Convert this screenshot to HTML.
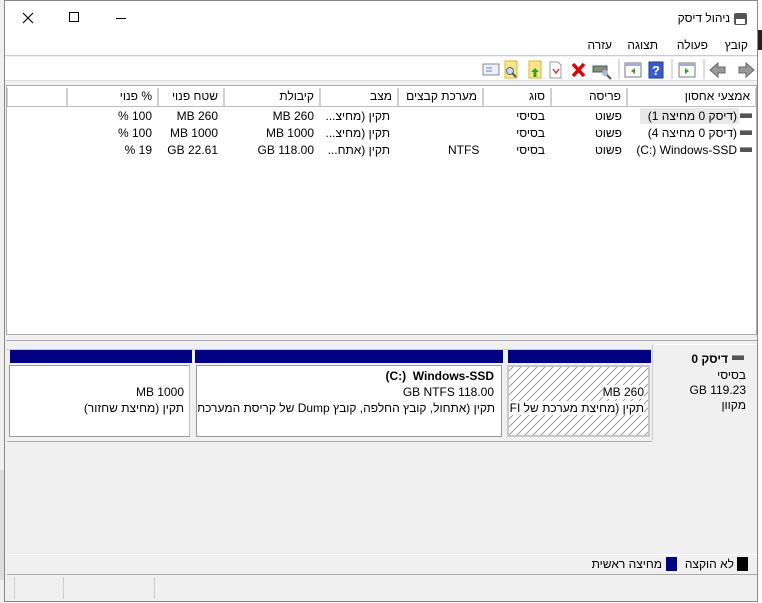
<!DOCTYPE html>
<html><head><meta charset="utf-8"><style>
*{margin:0;padding:0;box-sizing:border-box}
body{width:762px;height:603px;overflow:hidden;background:#fff;font-family:"Liberation Sans","Noto Sans CJK SC",sans-serif;font-size:12px;color:#000;position:relative}
.a{position:absolute}
.r{position:absolute;text-align:right;white-space:nowrap;direction:rtl}
.l{position:absolute;text-align:right;white-space:nowrap;direction:ltr}
.hd{position:absolute;top:88px;height:18px;border-right:1px solid #d0d0d0;border-left:1px solid #d0d0d0;background:#fff;text-align:right;padding-right:5px;line-height:17px;direction:rtl}
.dk{position:absolute;width:12px;height:5px;background:#555;border-top:1px solid #999}
</style></head><body>
<div class="a" style="left:0;top:0;width:5px;height:603px;background:#f0f0f0"></div>
<div class="a" style="left:0;top:470px;width:5px;height:110px;background:#ddd"></div>
<div class="a" style="left:757px;top:0;width:5px;height:603px;background:#fff"></div>
<div class="a" style="left:757px;top:30px;width:5px;height:20px;background:#222"></div>
<div class="a" style="left:4px;top:0;width:754px;height:602px;border:1px solid #888;background:#f0f0f0"></div>
<!-- title bar -->
<div class="a" style="left:5px;top:1px;width:752px;height:34px;background:#fff"></div>
<svg class="a" style="left:22px;top:12px" width="12" height="12"><path d="M1 1L11 11M11 1L1 11" stroke="#000" stroke-width="1.1"/></svg>
<div class="a" style="left:69px;top:12px;width:10px;height:10px;border:1px solid #000"></div>
<div class="a" style="left:116px;top:18px;width:10px;height:1px;background:#000"></div>
<div class="r" style="right:32px;top:11px;font-size:12px">ניהול דיסק</div>
<div class="a" style="left:734px;top:13px;width:13px;height:12px;background:#555;border-radius:2px"></div>
<div class="a" style="left:736px;top:19px;width:9px;height:5px;background:#fff"></div>
<!-- menu -->
<div class="a" style="left:5px;top:35px;width:752px;height:21px;background:#fff;border-bottom:1px solid #ccc"></div>
<div class="r" style="right:14px;top:38px">קובץ</div>
<div class="r" style="right:54px;top:38px">פעולה</div>
<div class="r" style="right:104px;top:38px">תצוגה</div>
<div class="r" style="right:150px;top:38px">עזרה</div>
<!-- toolbar -->
<div class="a" style="left:5px;top:57px;width:752px;height:24px;background:#fff;border-bottom:1px solid #ddd"></div>
<svg class="a" style="left:480px;top:59px" width="280" height="22">
<rect x="3" y="5" width="16" height="11" fill="#eef" stroke="#888"/><line x1="6" y1="9" x2="12" y2="9" stroke="#58c"/><line x1="6" y1="12" x2="12" y2="12" stroke="#58c"/>
<rect x="25" y="2" width="12" height="17" fill="#fde68a" stroke="#d8b43c"/><circle cx="30" cy="12" r="3.5" fill="#cde" stroke="#567"/><line x1="32" y1="14" x2="36" y2="18" stroke="#555" stroke-width="2"/>
<rect x="49" y="2" width="12" height="17" fill="#fde68a" stroke="#d8b43c"/><path d="M55 9l-4 4h2.5v5h3v-5h2.5z" fill="#2a2"/>
<path d="M70 3h8l3 3v13h-11z" fill="#fff" stroke="#999"/><path d="M73 10l3 4 3-4" stroke="#e33" fill="none" stroke-width="1.5"/>
<path d="M93 5l11 12M104 5l-11 12" stroke="#d00" stroke-width="3.5"/>
<rect x="113" y="7" width="14" height="6" fill="#888" stroke="#555"/><rect x="115" y="9" width="3" height="2" fill="#3c3"/><circle cx="125" cy="14" r="3" fill="#abc"/><line x1="127" y1="16" x2="131" y2="20" stroke="#555" stroke-width="2"/>
<line x1="139" y1="0" x2="139" y2="20" stroke="#bbb"/>
<rect x="145" y="4" width="16" height="14" fill="#fff" stroke="#777"/><rect x="145" y="4" width="16" height="3" fill="#aac"/><path d="M155 9l-4 3 4 3z" fill="#2a2"/>
<rect x="169" y="3" width="14" height="16" fill="#3a5cc8" stroke="#223a88"/><text x="172" y="16" fill="#fff" font-size="13" font-weight="bold" font-family="Liberation Sans">?</text>
<line x1="192" y1="0" x2="192" y2="20" stroke="#bbb"/>
<rect x="199" y="4" width="16" height="14" fill="#fff" stroke="#777"/><rect x="199" y="4" width="16" height="3" fill="#aac"/><path d="M205 9l4 3-4 3z" fill="#2a2"/>
<line x1="224" y1="0" x2="224" y2="20" stroke="#bbb"/>
<path d="M230 11l8-7v4h7v6h-7v4z" fill="#999" stroke="#666"/>
<path d="M274 11l-8-7v4h-7v6h7v4z" fill="#999" stroke="#666"/>
</svg>
<!-- list pane -->
<div class="a" style="left:6px;top:85px;width:751px;height:250px;background:#fff;border:1px solid #aaa"></div>
<div class="hd" style="left:7px;width:60px"></div>
<div class="hd" style="left:67px;width:91px">% פנוי</div>
<div class="hd" style="left:158px;width:66px">שטח פנוי</div>
<div class="hd" style="left:224px;width:96px">קיבולת</div>
<div class="hd" style="left:320px;width:78px">מצב</div>
<div class="hd" style="left:398px;width:85px">מערכת קבצים</div>
<div class="hd" style="left:483px;width:68px">סוג</div>
<div class="hd" style="left:551px;width:76px">פריסה</div>
<div class="hd" style="left:627px;width:129px">אמצעי אחסון</div>
<div class="a" style="left:7px;top:106px;width:749px;height:1px;background:#bbb"></div>
<div class="a" style="left:640px;top:108px;width:99px;height:16px;background:#e8e8e8"></div>
<!-- rows -->
<div class="dk" style="left:740px;top:113px"></div>
<div class="dk" style="left:740px;top:130px"></div>
<div class="dk" style="left:740px;top:147px"></div>
<div class="r" style="right:25px;top:109px">(דיסק 0 מחיצה 1)</div>
<div class="r" style="right:25px;top:126px">(דיסק 0 מחיצה 4)</div>
<div class="l" style="right:25px;top:143px">(C:) Windows-SSD</div>
<div class="r" style="right:140px;top:109px">פשוט</div><div class="r" style="right:140px;top:126px">פשוט</div><div class="r" style="right:140px;top:143px">פשוט</div>
<div class="r" style="right:217px;top:109px">בסיסי</div><div class="r" style="right:217px;top:126px">בסיסי</div><div class="r" style="right:217px;top:143px">בסיסי</div>
<div class="a" style="left:448px;top:143px">NTFS</div>
<div class="r" style="right:372px;top:109px">תקין (מחיצ...</div><div class="r" style="right:372px;top:126px">תקין (מחיצ...</div><div class="r" style="right:372px;top:143px">תקין (אתח...</div>
<div class="a" style="left:224px;width:90px;text-align:right;top:109px">MB 260</div><div class="a" style="left:224px;width:90px;text-align:right;top:126px">MB 1000</div><div class="a" style="left:224px;width:90px;text-align:right;top:143px">GB 118.00</div>
<div class="a" style="left:158px;width:60px;text-align:right;top:109px">MB 260</div><div class="a" style="left:158px;width:60px;text-align:right;top:126px">MB 1000</div><div class="a" style="left:158px;width:60px;text-align:right;top:143px">GB 22.61</div>
<div class="a" style="left:67px;width:85px;text-align:right;top:109px">% 100</div><div class="a" style="left:67px;width:85px;text-align:right;top:126px">% 100</div><div class="a" style="left:67px;width:85px;text-align:right;top:143px">% 19</div>
<!-- disk area -->
<div class="a" style="left:6px;top:340px;width:751px;height:1px;background:#aaa"></div>
<div class="a" style="left:7px;top:349px;width:645px;height:1px;background:#ccc"></div>
<div class="a" style="left:652px;top:344px;width:105px;height:96px;background:#f0f0f0;border-left:1px solid #ccc;border-top:1px solid #fff"></div>
<div class="a" style="left:7px;top:441px;width:645px;height:1px;background:#aaa"></div>
<div class="a" style="left:7px;top:350px;width:645px;height:91px;background:#f0f0f0"></div>
<div class="a" style="left:10px;top:350px;width:182px;height:13px;background:#000080"></div>
<div class="a" style="left:195px;top:350px;width:308px;height:13px;background:#000080"></div>
<div class="a" style="left:508px;top:350px;width:143px;height:13px;background:#000080"></div>
<div class="a" style="left:9px;top:365px;width:181px;height:72px;background:#fff;border:1px solid #999;border-right-color:#bbb"></div>
<div class="a" style="left:196px;top:365px;width:306px;height:72px;background:#fff;border:1px solid #999"></div>
<svg class="a" style="left:507px;top:365px" width="143" height="72"><defs><pattern id="h" width="8" height="8" patternUnits="userSpaceOnUse"><path d="M0 8L8 0" stroke="#888" stroke-width="0.8"/></pattern></defs><rect x="0" y="0" width="143" height="72" fill="#c8c8c8"/><rect x="2" y="2" width="139" height="68" fill="#fff"/><rect x="2" y="2" width="139" height="68" fill="url(#h)"/></svg>
<div class="r" style="right:578px;top:385px">MB 1000</div>
<div class="r" style="right:578px;top:401px">תקין (מחיצת שחזור)</div>
<div class="l" style="right:268px;top:369px;font-weight:bold">(C:)&nbsp; Windows-SSD</div>
<div class="r" style="right:268px;top:385px">GB NTFS 118.00</div>
<div class="a" style="left:198px;width:297px;top:401px;overflow:hidden;direction:rtl;white-space:nowrap;text-align:right">תקין (אתחול, קובץ החלפה, קובץ Dump של קריסת המערכת, מחיצה ראשית)</div>
<div class="a" style="left:509px;width:135px;top:385px;text-align:right"><span style="background:#fff">MB 260</span></div>
<div class="a" style="left:509px;width:135px;top:401px;overflow:hidden;direction:rtl;white-space:nowrap;text-align:right"><span style="background:#fff">תקין (מחיצת מערכת של EFI)</span></div>
<div class="dk" style="left:732px;top:355px"></div>
<div class="r" style="right:34px;top:352px;font-weight:bold">דיסק 0</div>
<div class="r" style="right:16px;top:368px">בסיסי</div>
<div class="r" style="right:16px;top:383px">GB 119.23</div>
<div class="r" style="right:16px;top:398px">מקוון</div>
<!-- legend -->
<div class="a" style="left:7px;top:554px;width:750px;height:1px;background:#fff"></div>
<div class="a" style="left:7px;top:574px;width:750px;height:1px;background:#aaa"></div>
<div class="a" style="left:737px;top:557px;width:11px;height:14px;background:#000"></div>
<div class="r" style="right:28px;top:557px">לא הוקצה</div>
<div class="a" style="left:666px;top:557px;width:11px;height:14px;background:#000080"></div>
<div class="r" style="right:100px;top:557px">מחיצה ראשית</div>
<!-- status -->
<div class="a" style="left:14px;top:577px;width:1px;height:22px;background:#ccc"></div>
<div class="a" style="left:63px;top:577px;width:1px;height:22px;background:#ccc"></div>
<div class="a" style="left:154px;top:577px;width:1px;height:22px;background:#ccc"></div>
</body></html>
